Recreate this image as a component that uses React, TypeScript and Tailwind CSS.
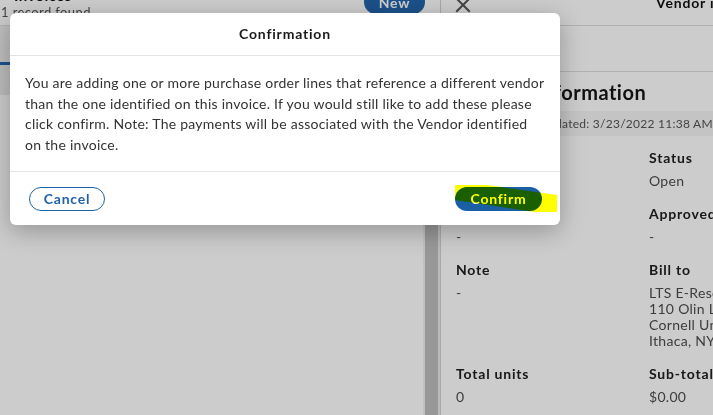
import React from "react";

type Field = { label: string; value: string[] };

const rows: Field[][] = [
  [
    { label: "Invoice date", value: ["3/23/2022"] },
    { label: "Status", value: ["Open"] },
  ],
  [
    { label: "Payment due", value: ["-"] },
    { label: "Approved by", value: ["-"] },
  ],
  [
    { label: "Note", value: ["-"] },
    {
      label: "Bill to",
      value: ["LTS E-Resources", "110 Olin Library", "Cornell University", "Ithaca, NY 14853"],
    },
  ],
  [
    { label: "Total units", value: ["0"] },
    { label: "Sub-total", value: ["$0.00"] },
  ],
];

function KeyValue({ field }: { field: Field }) {
  return (
    <div className="mb-[15px]">
      <div className="whitespace-nowrap text-[14px] font-bold leading-[20px] tracking-[0.8px] text-[#202020]">
        {field.label}
      </div>
      <div className="mt-[5px] text-[14px] leading-[16px] tracking-[0.3px] text-[#4d4d4d]">
        {field.value.map((line) => (
          <div key={line} className="whitespace-nowrap">
            {line}
          </div>
        ))}
      </div>
    </div>
  );
}

function CloseIcon() {
  return (
    <svg width="18" height="18" viewBox="0 0 18 18" fill="none" stroke="#555" strokeWidth="2" strokeLinecap="square">
      <line x1="3" y1="3" x2="15" y2="15" />
      <line x1="15" y1="3" x2="3" y2="15" />
    </svg>
  );
}

export default function App() {
  return (
    <div className="relative h-[415px] w-[713px] overflow-hidden bg-white font-['Lato','Noto_Sans',sans-serif] text-[14px] tracking-[0.4px] text-[#333]">
      {/* Page underneath the dialog */}
      <div className="-mt-[20px] flex h-[435px]">
        {/* Results pane */}
        <div className="flex w-[440px] shrink-0 flex-col">
          <div className="relative flex h-[46px] shrink-0 items-center justify-between border-b border-[#dcdcdc] pr-[15px]">
            <div className="flex flex-col">
              <div className="ml-[14px] text-[15px] font-bold leading-[18px] text-[#111]">Invoices</div>
              <div className="ml-[1px] text-[13px] leading-[16px] text-[#555]">1 record found</div>
            </div>
            <button className="-mt-[1px] flex h-[24px] w-[61px] items-center justify-center rounded-full bg-[#2266ad] text-[14px] font-bold tracking-[0.8px] text-white">
              New
            </button>
          </div>
          <div className="flex min-h-0 flex-1">
            <div className="flex flex-1 flex-col">
              <div className="h-[36px] bg-[#eeeeee]" />
              <div className="h-[3px] bg-[#2468ad]" />
              <div className="h-[30px] bg-[#ececec]" />
              <div className="flex-1" />
            </div>
            {/* Scrollbar */}
            <div className="flex w-[17px] shrink-0">
              <div className="w-[2px] bg-[#f2f2f2]" />
              <div className="w-[13px] bg-[#bfbfbf]" />
              <div className="w-[2px] bg-[#e9e9e9]" />
            </div>
          </div>
        </div>

        {/* Invoice detail pane */}
        <div className="flex min-w-0 flex-1 flex-col border-l border-[#d4d4d4]">
          <div className="flex h-[46px] shrink-0 items-center border-b border-[#dedede]">
            <div className="ml-[13px] mt-[4px]">
              <CloseIcon />
            </div>
            <div className="ml-[184px] whitespace-nowrap text-[14px] font-bold tracking-[0.8px] text-[#111]">
              Vendor invoice number - 10001
            </div>
          </div>
          <div className="h-[46px] shrink-0 border-b border-[#dedede]" />
          <div className="pt-[8px]">
            <h2 className="pl-[23px] text-[20px] font-bold leading-[24px] tracking-[0.5px] text-[#151515]">
              Invoice information
            </h2>
            <div className="mt-[7px] flex h-[25px] items-center whitespace-nowrap bg-[#f5f5f5] pl-[36px] text-[12px] tracking-[0.25px] text-[#555]">
              Record last updated: 3/23/2022 11:38 AM
            </div>
            <div className="mt-[12px] pl-[15px]">
              {rows.map((row, i) => (
                <div key={i} className="grid grid-cols-[193px_193px]">
                  {row.map((f) => (
                    <KeyValue key={f.label} field={f} />
                  ))}
                </div>
              ))}
            </div>
          </div>
        </div>
      </div>

      {/* Dimmed backdrop */}
      <div className="absolute inset-0 bg-black/20" />

      {/* Confirmation dialog */}
      <div className="absolute left-[10px] top-[13px] w-[550px] rounded-[6px] bg-white shadow-[0_6px_24px_rgba(0,0,0,0.28)]">
        <div className="flex h-[43px] items-center justify-center border-b border-[#e3e3e3] pb-[1px] text-[14px] font-bold tracking-[0.8px] text-[#1a1a1a]">
          Confirmation
        </div>
        <div className="px-[15px] pb-[16px] pt-[17px] text-[14px] leading-[20.5px] tracking-[0.25px] text-[#333]">
          You are adding one or more purchase order lines that reference a different vendor than the one identified on
          this invoice. If you would still like to add these please click confirm. Note: The payments will be associated
          with the Vendor identified on the invoice.
        </div>
        <div className="flex h-[54px] items-center justify-between border-t border-[#e3e3e3] pl-[19px] pr-[18px]">
          <button className="flex h-[24px] w-[76px] items-center justify-center rounded-full border border-[#1f62a8] text-[14px] font-bold tracking-[0.8px] text-[#1f62a8]">
            Cancel
          </button>
          <div className="relative">
            <button className="flex h-[24px] w-[87px] items-center justify-center rounded-full bg-[#1a5fa3] text-[14px] font-bold tracking-[0.8px] text-white">
              Confirm
            </button>
            {/* Highlighter stroke across the button */}
            <svg
              className="pointer-events-none absolute left-0 top-[-2px] mix-blend-multiply"
              width="103"
              height="28"
              viewBox="0 0 103 28"
            >
              <polygon points="0,0 32,0 102,10 102,27 80,27 0,15" fill="#ffff00" />
            </svg>
          </div>
        </div>
      </div>
    </div>
  );
}
